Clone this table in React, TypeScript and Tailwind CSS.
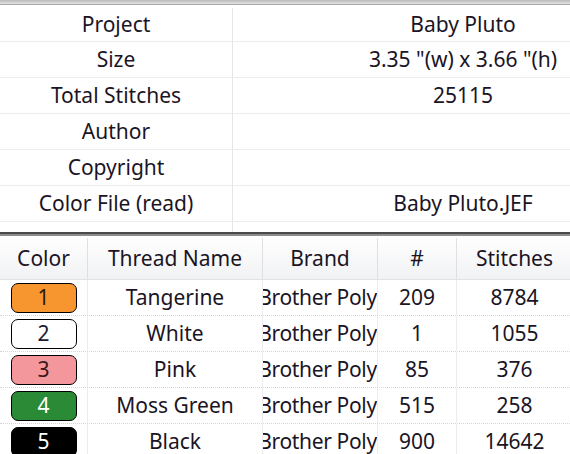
import React from 'react';

const info = [
  { label: 'Project', value: 'Baby Pluto' },
  { label: 'Size', value: '3.35 "(w) x 3.66 "(h)' },
  { label: 'Total Stitches', value: '25115' },
  { label: 'Author', value: '' },
  { label: 'Copyright', value: '' },
  { label: 'Color File (read)', value: 'Baby Pluto.JEF' },
];

const threads = [
  { n: 1, name: 'Tangerine', num: '209', stitches: '8784', swatch: 'bg-[#f7962f] text-[#2a1a10]' },
  { n: 2, name: 'White', num: '1', stitches: '1055', swatch: 'bg-white text-[#1b1b2b]' },
  { n: 3, name: 'Pink', num: '85', stitches: '376', swatch: 'bg-[#f4979c] text-[#3a1a1a]' },
  { n: 4, name: 'Moss Green', num: '515', stitches: '258', swatch: 'bg-[#2b8a36] text-white' },
  { n: 5, name: 'Black', num: '900', stitches: '14642', swatch: 'bg-black text-white' },
];

// column widths for the thread list
const cols = ['w-[88px]', 'w-[175px]', 'w-[115px]', 'w-[79px]', 'w-[116px]'];

export default function App() {
  return (
    <div className="w-[570px] h-[454px] overflow-hidden bg-white text-[21px] leading-none text-[#1b1424] font-['Noto_Sans',sans-serif]">
      <div className="w-[700px]">
        <div className="h-[5px] bg-gradient-to-b from-[#b9b9b9] to-[#e4e4e4] border-b border-[#a8a8a8]" />
        {info.map((row, i) => (
          <div key={row.label} className={`flex ${i === 0 ? 'h-[37px] pt-[3px]' : 'h-[36px]'} border-b border-[#ececec]`}>
            <div className="w-[233px] flex items-center justify-center border-r border-[#e6e6e6]">{row.label}</div>
            <div className="w-[460px] flex items-center justify-center">{row.value}</div>
          </div>
        ))}
        <div className="flex h-[10px]">
          <div className="w-[233px] border-r border-[#e6e6e6]" />
        </div>
        <div className="h-[4px] border-t-2 border-b-2 border-t-[#4a4a4a] border-b-[#8c8c8c]" />

        <div className="flex h-[44px] pt-[2px] bg-gradient-to-b from-white to-[#f1f2f4] border-b border-[#e2e2e2]">
          {['Color', 'Thread Name', 'Brand', '#', 'Stitches'].map((h, i) => (
            <div key={h} className={`${cols[i]} flex items-center justify-center border-r border-[#e0e0e0]`}>{h}</div>
          ))}
        </div>
        {threads.map((t) => (
          <div key={t.n} className="flex h-[36px] border-b border-dotted border-[#d6d6d6]">
            <div className={`${cols[0]} flex items-center justify-center border-r border-[#ececec]`}>
              <div className={`w-[66px] h-[30px] rounded-[7px] border-[1.5px] border-black flex items-center justify-center ${t.swatch}`}>
                {t.n}
              </div>
            </div>
            <div className={`${cols[1]} flex items-center justify-center border-r border-[#ececec]`}>{t.name}</div>
            {/* brand text is wider than its column and gets cut at the left, as in the list view */}
            <div className={`${cols[2]} flex items-center justify-center overflow-hidden whitespace-nowrap pr-[5px] border-r border-[#ececec]`}>
              <span className="shrink-0 tracking-[-0.35px]">Brother Poly</span>
            </div>
            <div className={`${cols[3]} flex items-center justify-center border-r border-[#ececec]`}>{t.num}</div>
            <div className={`${cols[4]} flex items-center justify-center border-r border-[#ececec]`}>{t.stitches}</div>
          </div>
        ))}
      </div>
    </div>
  );
}
